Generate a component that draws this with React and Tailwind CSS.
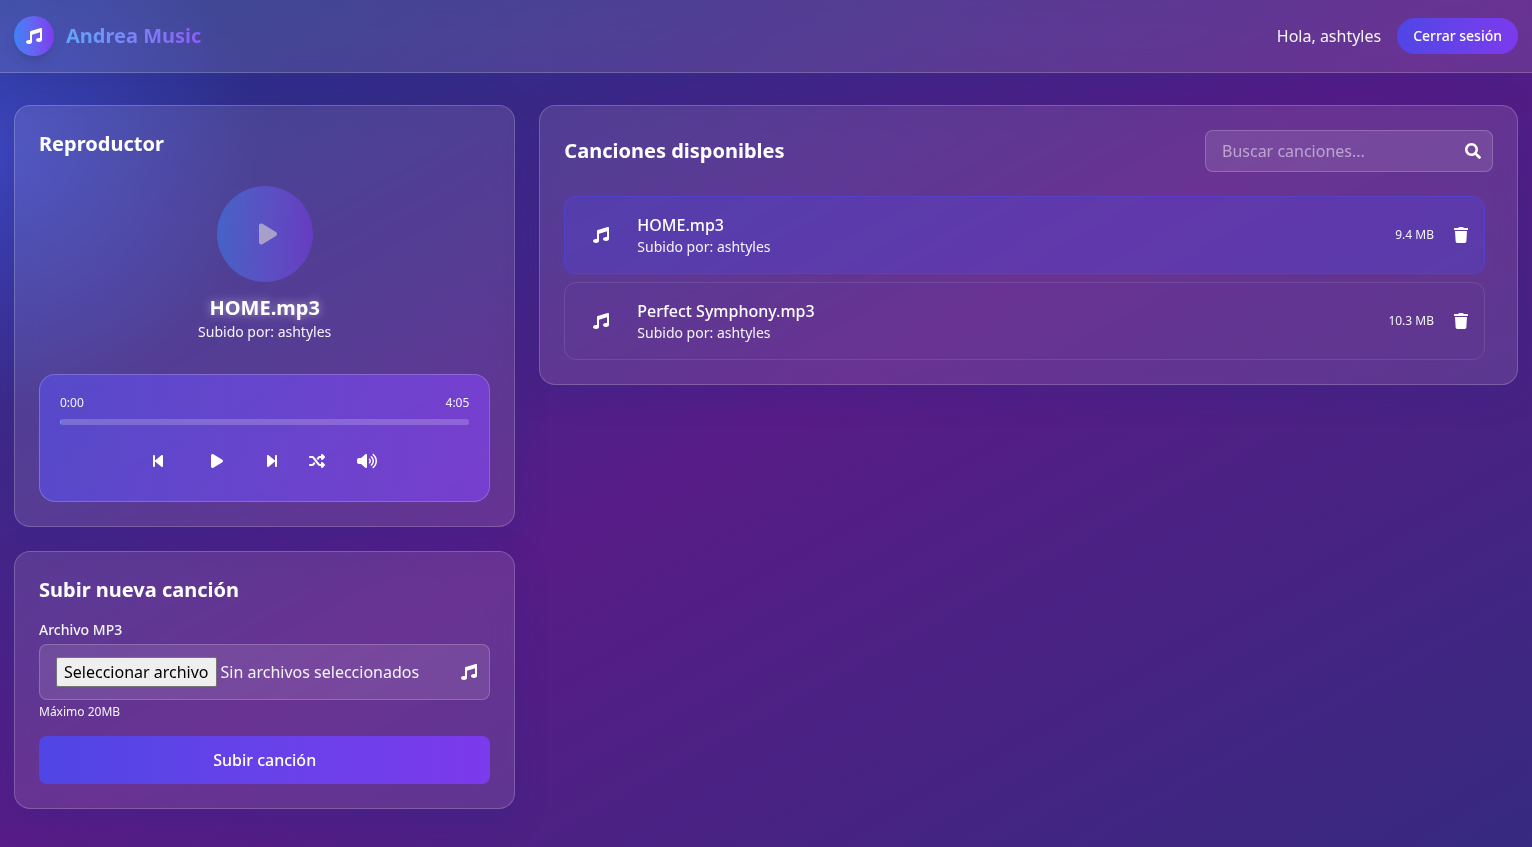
import { useRef, useState } from 'react';
import { FaMusic, FaSearch, FaTrash } from 'react-icons/fa';
import {
  FaPlay,
  FaBackwardStep,
  FaForwardStep,
  FaShuffle,
  FaVolumeHigh,
} from 'react-icons/fa6';

const SONGS = [
  { id: 1, title: 'HOME.mp3', user: 'ashtyles', size: '9.4 MB' },
  { id: 2, title: 'Perfect Symphony.mp3', user: 'ashtyles', size: '10.3 MB' },
];

const CARD =
  'rounded-2xl border border-white/20 bg-white/10 p-6 shadow-[0_8px_32px_rgba(31,38,135,0.25)] backdrop-blur-md';

function Header() {
  return (
    <header className="border-b border-white/20 bg-white/10 px-[14px] py-4 shadow-[0_8px_32px_rgba(31,38,135,0.25)] backdrop-blur-md">
      <div className="flex items-center justify-between">
        <div className="flex items-center gap-3">
          <div className="flex size-10 items-center justify-center rounded-full bg-linear-to-r from-[#3b82f6] to-[#7c3aed] shadow-lg">
            <FaMusic className="size-4" />
          </div>
          <h1 className="bg-linear-to-r from-[#60a5fa] to-[#8b5cf6] bg-clip-text text-xl font-bold text-transparent">
            Andrea Music
          </h1>
        </div>
        <div className="flex items-center gap-4">
          <span className="text-gray-100">Hola, ashtyles</span>
          <button
            type="button"
            className="rounded-full bg-linear-to-r from-[#4f46e5] to-[#7c3aed] px-4 py-2 text-sm font-medium"
          >
            Cerrar sesión
          </button>
        </div>
      </div>
    </header>
  );
}

function Player({ song }) {
  return (
    <section className={CARD}>
      <h2 className="text-xl font-bold">Reproductor</h2>

      <div className="mt-7 flex flex-col items-center">
        <div className="mb-3 flex size-24 items-center justify-center rounded-full bg-linear-to-r from-[#3b82f6] to-[#7c3aed] pl-1.5 opacity-50">
          <FaPlay className="size-6" />
        </div>
        <h3 className="text-xl font-bold [text-shadow:0_0_10px_rgba(255,255,255,0.5)]">
          {song.title}
        </h3>
        <p className="text-sm text-gray-100">Subido por: {song.user}</p>
      </div>

      <div className="mt-8 rounded-2xl border border-white/20 bg-linear-to-r from-[#5a50e6]/65 to-[#8244ee]/65 p-5">
        <div className="flex justify-between text-xs text-gray-100">
          <span>0:00</span>
          <span>4:05</span>
        </div>
        <div className="mt-2 h-1.5 overflow-hidden rounded-[3px] bg-white/20">
          <div className="h-full w-px bg-[#60a5fa]"></div>
        </div>
        <div className="mt-4 flex items-center justify-center gap-4">
          <button type="button" aria-label="Anterior" className="p-2">
            <FaBackwardStep className="h-4 w-[10px]" />
          </button>
          <button type="button" aria-label="Reproducir" className="px-5 py-3">
            <FaPlay className="ml-1 h-4 w-3" />
          </button>
          <button type="button" aria-label="Siguiente" className="p-2">
            <FaForwardStep className="h-4 w-[10px]" />
          </button>
          <button type="button" aria-label="Aleatorio" className="p-2">
            <FaShuffle className="size-4" />
          </button>
          <button type="button" aria-label="Volumen" className="p-2">
            <FaVolumeHigh className="h-4 w-5" />
          </button>
        </div>
      </div>
    </section>
  );
}

function UploadForm() {
  const fileInput = useRef(null);
  const [fileName, setFileName] = useState('');

  return (
    <section className={CARD}>
      <h2 className="text-xl font-bold">Subir nueva canción</h2>

      <form className="mt-4" onSubmit={e => e.preventDefault()}>
        <label htmlFor="song-file" className="block text-sm font-medium text-gray-100">
          Archivo MP3
        </label>
        <div className="relative mt-1 flex items-center gap-1 rounded-lg border border-white/20 bg-white/10 py-3 pr-3 pl-4">
          <input
            id="song-file"
            ref={fileInput}
            type="file"
            accept=".mp3"
            className="sr-only"
            onChange={e => setFileName(e.target.files[0]?.name || '')}
          />
          <button
            type="button"
            onClick={() => fileInput.current.click()}
            className="rounded-xs border border-[#767676] bg-[#efefef] px-[7px] py-0.5 text-black"
          >
            Seleccionar archivo
          </button>
          <span className="text-gray-100">{fileName || 'Sin archivos seleccionados'}</span>
          <FaMusic className="ml-auto size-4" />
        </div>
        <p className="mt-1 text-xs text-gray-100">Máximo 20MB</p>

        <button
          type="submit"
          className="mt-4 w-full rounded-lg bg-linear-to-r from-[#4f46e5] to-[#7c3aed] py-3 font-medium"
        >
          Subir canción
        </button>
      </form>
    </section>
  );
}

function SongRow({ song, active }) {
  return (
    <li
      className={`flex items-center gap-4 rounded-xl border p-4 ${
        active ? 'border-[#4f46e5]/50 bg-[#4f46e5]/30' : 'border-white/10'
      }`}
    >
      <div className="flex size-10 items-center justify-center">
        <FaMusic className="size-4" />
      </div>
      <div className="min-w-0 flex-1">
        <h3 className="truncate font-medium">{song.title}</h3>
        <p className="text-sm text-gray-100">Subido por: {song.user}</p>
      </div>
      <div className="flex items-center gap-5">
        <span className="text-xs text-gray-100">{song.size}</span>
        <button type="button" aria-label={`Eliminar ${song.title}`}>
          <FaTrash className="h-4 w-[14px]" />
        </button>
      </div>
    </li>
  );
}

export default function App() {
  const [query, setQuery] = useState('');
  const current = SONGS[0];
  const visible = SONGS.filter(s => s.title.toLowerCase().includes(query.toLowerCase()));

  return (
    <div className="min-h-screen bg-[radial-gradient(circle_at_0px_150px,rgba(79,90,240,0.5),transparent_260px),linear-gradient(to_bottom_right,#24368a,#581c87,#372a80)] font-['Noto_Sans',sans-serif] text-white">
      <Header />

      <main className="flex items-start gap-6 px-[14px] py-8">
        <div className="flex w-1/3 shrink-0 flex-col gap-6">
          <Player song={current} />
          <UploadForm />
        </div>

        <section className={`flex-1 ${CARD}`}>
          <div className="mb-6 flex items-center justify-between">
            <h2 className="text-xl font-bold">Canciones disponibles</h2>
            <div className="relative w-72">
              <input
                type="text"
                aria-label="Buscar canciones"
                placeholder="Buscar canciones..."
                value={query}
                onChange={e => setQuery(e.target.value)}
                className="w-full rounded-lg border border-white/20 bg-white/10 px-4 py-2 pr-10 placeholder:text-white/50"
              />
              <FaSearch className="absolute right-3 top-1/2 size-4 -translate-y-1/2" />
            </div>
          </div>

          <ul className="space-y-2 pr-2">
            {visible.map(song => (
              <SongRow key={song.id} song={song} active={song.id === current.id} />
            ))}
          </ul>
        </section>
      </main>
    </div>
  );
}
